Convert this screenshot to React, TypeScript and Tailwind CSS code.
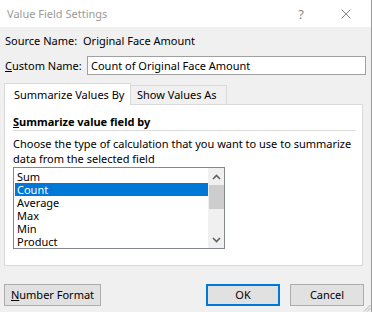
import React from "react";

const items = ["Sum", "Count", "Average", "Max", "Min", "Product"];

function Chevron({ up }: { up?: boolean }) {
  return (
    <svg width="9" height="6" viewBox="0 0 9 6" className="block">
      <path
        d={up ? "M1 5 L4.5 1.5 L8 5" : "M1 1 L4.5 4.5 L8 1"}
        fill="none"
        stroke="#606060"
        strokeWidth="1.6"
      />
    </svg>
  );
}

export default function App() {
  return (
    <div
      className="relative flex h-[312px] w-[372px] flex-col overflow-hidden whitespace-nowrap border-r border-[#9a9a9a] bg-[#f0f0f0] text-[11px] leading-[14px] text-black"
      style={{ fontFamily: '"Noto Sans", "Open Sans", sans-serif' }}
    >
      {/* title bar */}
      <div className="flex h-[27px] shrink-0 items-center bg-white pl-[7px]">
        <span className="text-[11px] text-[#9b9b9b]">Value Field Settings</span>
        <span className="ml-auto mr-[37px] text-[13px] text-[#8a8a8a]">?</span>
        <svg width="10" height="10" viewBox="0 0 10 10" className="mr-[20px]">
          <path d="M0.5 0.5 L9.5 9.5 M9.5 0.5 L0.5 9.5" stroke="#8a8a8a" strokeWidth="1" />
        </svg>
      </div>

      {/* source name */}
      <div className="mt-[7px] flex h-[14px] shrink-0 items-center pl-[5px]">
        <span className="w-[78px] shrink-0">Source Name:</span>
        <span>Original Face Amount</span>
      </div>

      {/* custom name */}
      <div className="mt-[8px] flex h-[19px] shrink-0 items-center pl-[5px]">
        <span className="w-[82px] shrink-0">
          <span className="underline">C</span>ustom Name:
        </span>
        <div className="flex h-[19px] w-[279px] shrink-0 items-center border border-[#a0a0a0] bg-white pl-[3px]">
          Count of Original Face Amount
        </div>
      </div>

      {/* tabs */}
      <div className="mt-[7px] flex h-[22px] shrink-0 items-end pl-[4px]">
        <div className="relative z-10 -mb-px flex h-[22px] w-[127px] shrink-0 items-center border border-b-0 border-[#d9d9d9] bg-white pl-[9px]">
          Summarize Values By
        </div>
        <div className="flex h-[19px] w-[96px] shrink-0 items-center border border-l-0 border-b-0 border-[#d9d9d9] bg-[#f0f0f0] pl-[6px]">
          Show Values As
        </div>
      </div>

      {/* panel */}
      <div className="ml-[4px] flex h-[162px] w-[359px] shrink-0 flex-col border border-[#d9d9d9] bg-white px-[8px]">
        <div className="mt-[10px] h-[14px] shrink-0 font-bold">
          <span className="underline">S</span>ummarize value field by
        </div>
        <div className="mt-[1px] h-px w-[343px] shrink-0 bg-[#dcdcdc]" />
        <div className="mt-[5px] shrink-0 leading-[15px]">
          Choose the type of calculation that you want to use to summarize
          <br />
          data from the selected field
        </div>
        <div className="mt-[1px] flex h-[82px] w-[212px] shrink-0 border border-[#828790] bg-white">
          <div className="flex flex-1 flex-col pl-[1px] pt-[2px] leading-[13px]">
            {items.map((it) => (
              <div
                key={it}
                className={
                  it === "Count"
                    ? "flex h-[13px] shrink-0 items-center bg-[#0078d7] pl-[2px] text-white"
                    : "flex h-[13px] shrink-0 items-center pl-[2px]"
                }
              >
                {it}
              </div>
            ))}
          </div>
          <div className="flex w-[16px] flex-col items-center bg-[#f0f0f0]">
            <div className="flex h-[17px] items-center">
              <Chevron up />
            </div>
            <div className="h-[24px] w-[15px] bg-[#cdcdcd]" />
            <div className="flex-1" />
            <div className="flex h-[17px] items-center">
              <Chevron />
            </div>
          </div>
        </div>
      </div>

      {/* buttons */}
      <div className="mt-[18px] flex h-[22px] shrink-0 items-stretch pl-[4px]">
        <div className="flex w-[97px] shrink-0 items-center justify-center border border-[#adadad] bg-[#e1e1e1]">
          <span>
            <span className="underline">N</span>umber Format
          </span>
        </div>
        <div className="ml-[105px] flex w-[74px] shrink-0 items-center justify-center border-2 border-[#0078d7] bg-[#e1e1e1]">
          OK
        </div>
        <div className="ml-[10px] flex w-[74px] shrink-0 items-center justify-center border border-[#adadad] bg-[#e1e1e1]">
          Cancel
        </div>
      </div>

      {/* resize grip */}
      <svg width="8" height="8" viewBox="0 0 8 8" className="absolute bottom-0 right-0">
        <path d="M7.5 1 L1 7.5 M7.5 4 L4 7.5" stroke="#b0b0b0" strokeWidth="1" />
      </svg>
    </div>
  );
}
